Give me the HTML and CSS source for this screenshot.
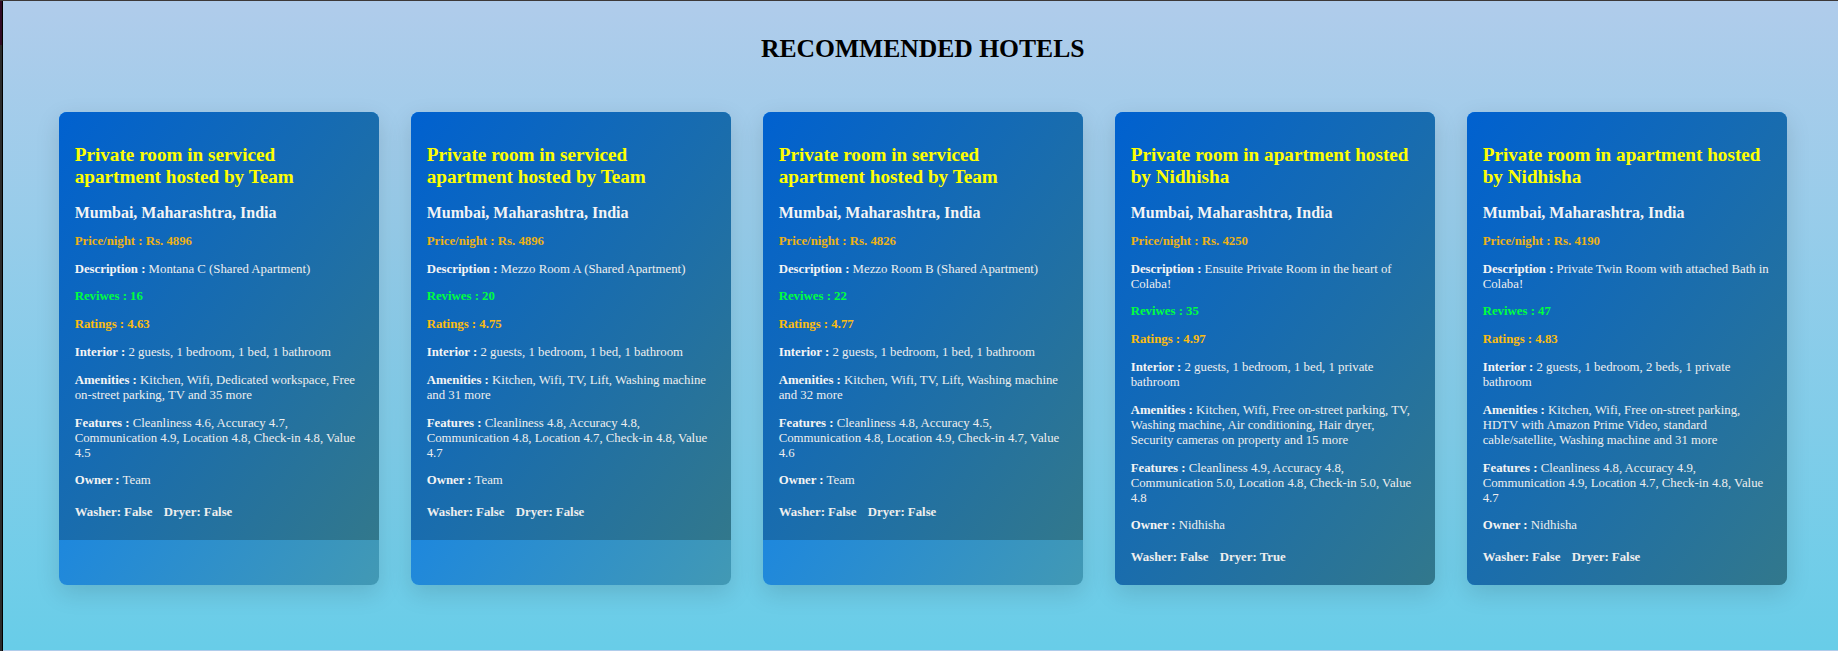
FILE: index.html
```html
<!DOCTYPE html>
<html lang="en">
<head>
<meta charset="utf-8">
<title>Recommended Hotels</title>
<link rel="stylesheet" href="styles.css">
</head>
<body>
<div class="edge"></div>
<main class="page">
<h1 class="heading">RECOMMENDED HOTELS</h1>
<section class="cards">
<article class="card"><div class="content">
<h2 class="name">Private room in serviced apartment hosted by Team</h2>
<h3 class="place">Mumbai, Maharashtra, India</h3>
<p class="gold">Price/night : Rs. 4896</p>
<p><b>Description :</b> Montana C (Shared Apartment)</p>
<p class="green">Reviwes : 16</p>
<p class="gold rating">Ratings : 4.63</p>
<p><b>Interior :</b> 2 guests, 1 bedroom, 1 bed, 1 bathroom</p>
<p><b>Amenities :</b> Kitchen, Wifi, Dedicated workspace, Free on-street parking, TV and 35 more</p>
<p><b>Features :</b> Cleanliness 4.6, Accuracy 4.7, Communication 4.9, Location 4.8, Check-in 4.8, Value 4.5</p>
<p><b>Owner :</b> Team</p>
<div class="extras"><span>Washer: False</span><span>Dryer: False</span></div>
</div></article>
<article class="card"><div class="content">
<h2 class="name">Private room in serviced apartment hosted by Team</h2>
<h3 class="place">Mumbai, Maharashtra, India</h3>
<p class="gold">Price/night : Rs. 4896</p>
<p><b>Description :</b> Mezzo Room A (Shared Apartment)</p>
<p class="green">Reviwes : 20</p>
<p class="gold rating">Ratings : 4.75</p>
<p><b>Interior :</b> 2 guests, 1 bedroom, 1 bed, 1 bathroom</p>
<p><b>Amenities :</b> Kitchen, Wifi, TV, Lift, Washing machine and 31 more</p>
<p><b>Features :</b> Cleanliness 4.8, Accuracy 4.8, Communication 4.8, Location 4.7, Check-in 4.8, Value 4.7</p>
<p><b>Owner :</b> Team</p>
<div class="extras"><span>Washer: False</span><span>Dryer: False</span></div>
</div></article>
<article class="card"><div class="content">
<h2 class="name">Private room in serviced apartment hosted by Team</h2>
<h3 class="place">Mumbai, Maharashtra, India</h3>
<p class="gold">Price/night : Rs. 4826</p>
<p><b>Description :</b> Mezzo Room B (Shared Apartment)</p>
<p class="green">Reviwes : 22</p>
<p class="gold rating">Ratings : 4.77</p>
<p><b>Interior :</b> 2 guests, 1 bedroom, 1 bed, 1 bathroom</p>
<p><b>Amenities :</b> Kitchen, Wifi, TV, Lift, Washing machine and 32 more</p>
<p><b>Features :</b> Cleanliness 4.8, Accuracy 4.5, Communication 4.8, Location 4.9, Check-in 4.7, Value 4.6</p>
<p><b>Owner :</b> Team</p>
<div class="extras"><span>Washer: False</span><span>Dryer: False</span></div>
</div></article>
<article class="card"><div class="content">
<h2 class="name">Private room in apartment hosted by Nidhisha</h2>
<h3 class="place">Mumbai, Maharashtra, India</h3>
<p class="gold">Price/night : Rs. 4250</p>
<p><b>Description :</b> Ensuite Private Room in the heart of Colaba!</p>
<p class="green">Reviwes : 35</p>
<p class="gold rating">Ratings : 4.97</p>
<p><b>Interior :</b> 2 guests, 1 bedroom, 1 bed, 1 private bathroom</p>
<p><b>Amenities :</b> Kitchen, Wifi, Free on-street parking, TV, Washing machine, Air conditioning, Hair dryer, Security cameras on property and 15 more</p>
<p><b>Features :</b> Cleanliness 4.9, Accuracy 4.8, Communication 5.0, Location 4.8, Check-in 5.0, Value 4.8</p>
<p><b>Owner :</b> Nidhisha</p>
<div class="extras"><span>Washer: False</span><span>Dryer: True</span></div>
</div></article>
<article class="card"><div class="content">
<h2 class="name">Private room in apartment hosted by Nidhisha</h2>
<h3 class="place">Mumbai, Maharashtra, India</h3>
<p class="gold">Price/night : Rs. 4190</p>
<p><b>Description :</b> Private Twin Room with attached Bath in Colaba!</p>
<p class="green">Reviwes : 47</p>
<p class="gold rating">Ratings : 4.83</p>
<p><b>Interior :</b> 2 guests, 1 bedroom, 2 beds, 1 private bathroom</p>
<p><b>Amenities :</b> Kitchen, Wifi, Free on-street parking, HDTV with Amazon Prime Video, standard cable/satellite, Washing machine and 31 more</p>
<p><b>Features :</b> Cleanliness 4.8, Accuracy 4.9, Communication 4.9, Location 4.7, Check-in 4.8, Value 4.7</p>
<p><b>Owner :</b> Nidhisha</p>
<div class="extras"><span>Washer: False</span><span>Dryer: False</span></div>
</div></article>
</section>
</main>
</body>
</html>
```
FILE: styles.css
```css
* { box-sizing: border-box; }
html {
  height: 100%;
  overflow: hidden;
}
body {
  margin: 0;
  height: 100%;
  display: flex;
  overflow: hidden;
  border-top: 1px solid #3c3838;
  font-family: "Liberation Serif", "Times New Roman", serif;
  background: #b0cceb;
}
.edge {
  width: 3px;
  flex: none;
  border-right: 1px solid #000;
  background: linear-gradient(#300a24 0 44px, #2b2b2b 44px);
}
.page {
  flex: 1;
  height: 649px;
  background: linear-gradient(#b0cceb, #68cde8);
}
.heading {
  margin: 0;
  padding: 33px 0 0 4.4px;
  height: 111px;
  font-size: 25.6px;
  line-height: 29px;
  text-align: center;
  color: #000;
}
.cards {
  display: flex;
  gap: 32px;
  padding-left: 55.7px;
}
.card {
  width: 320px;
  flex: none;
  overflow: hidden;
  border-radius: 8px;
  color: #eee;
  background: linear-gradient(124deg, #0079ff, #4299b4);
  box-shadow: 0 8px 24px rgba(0, 0, 0, 0.13);
}
.content {
  padding: 16px;
  background: linear-gradient(126deg, #0061d0, #32788c);
}
.name {
  margin: 15.94px 0;
  font-size: 19.2px;
  line-height: 22px;
  color: #ff0;
}
.place {
  margin: 15.94px 0 11.93px;
  font-size: 16px;
  line-height: 18px;
  color: #f4f4f4;
}
.content p {
  margin: 0 0 12.8px;
  font-size: 12.8px;
  line-height: 15px;
}
.content p b { color: #f4f4f4; }
.content .gold { font-weight: bold; color: #edb215; }
.content .rating { color: #fcbc10; }
.content .green { font-weight: bold; color: #00ff40; }
.extras {
  display: flex;
  gap: 11.2px;
  padding: 4.3px 0 3.9px;
  font-size: 12.8px;
  line-height: 15px;
  font-weight: bold;
}
```
